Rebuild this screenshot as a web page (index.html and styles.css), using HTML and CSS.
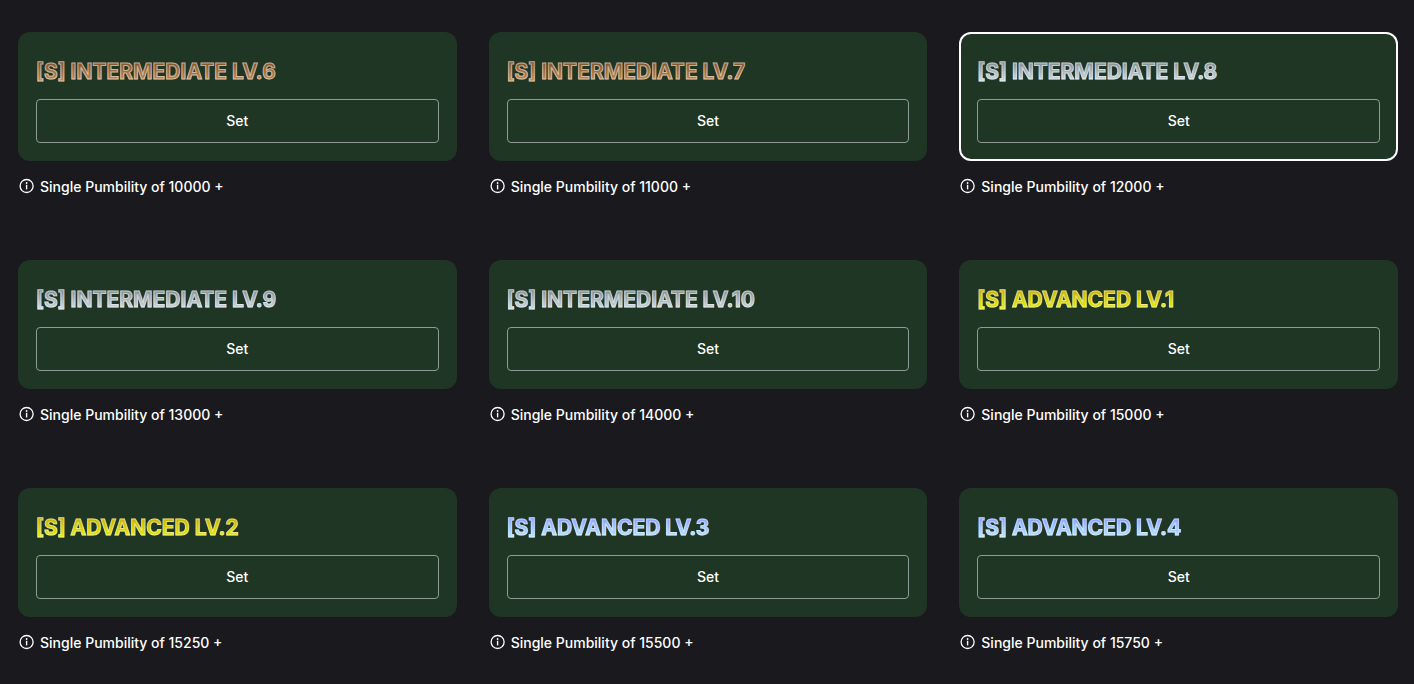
FILE: index.html
```
<!DOCTYPE html>
<html lang="en">
<head>
<meta charset="utf-8">
<meta name="viewport" content="width=device-width, initial-scale=1">
<title>Titles</title>
<link rel="stylesheet" href="styles.css">
</head>
<body>
<svg class="sprite" aria-hidden="true">
  <symbol id="info" viewBox="0 0 16 16">
    <circle cx="7.6" cy="8" r="6.5" fill="none" stroke="currentColor" stroke-width="1.3"/>
    <rect x="6.9" y="6.8" width="1.4" height="4.6" fill="currentColor"/>
    <circle cx="7.6" cy="5" r=".9" fill="currentColor"/>
  </symbol>
</svg>
<main class="grid">
  <article class="item">
    <section class="card"><h2 class="title bronze">[S] INTERMEDIATE LV.6</h2><button class="set" type="button">Set</button></section>
    <p class="note"><svg class="icon" aria-hidden="true"><use href="#info"/></svg><span>Single Pumbility of 10000 +</span></p>
  </article>
  <article class="item">
    <section class="card"><h2 class="title bronze">[S] INTERMEDIATE LV.7</h2><button class="set" type="button">Set</button></section>
    <p class="note"><svg class="icon" aria-hidden="true"><use href="#info"/></svg><span>Single Pumbility of 11000 +</span></p>
  </article>
  <article class="item">
    <section class="card selected"><h2 class="title silver">[S] INTERMEDIATE LV.8</h2><button class="set" type="button">Set</button></section>
    <p class="note"><svg class="icon" aria-hidden="true"><use href="#info"/></svg><span>Single Pumbility of 12000 +</span></p>
  </article>
  <article class="item">
    <section class="card"><h2 class="title silver">[S] INTERMEDIATE LV.9</h2><button class="set" type="button">Set</button></section>
    <p class="note"><svg class="icon" aria-hidden="true"><use href="#info"/></svg><span>Single Pumbility of 13000 +</span></p>
  </article>
  <article class="item">
    <section class="card"><h2 class="title silver">[S] INTERMEDIATE LV.10</h2><button class="set" type="button">Set</button></section>
    <p class="note"><svg class="icon" aria-hidden="true"><use href="#info"/></svg><span>Single Pumbility of 14000 +</span></p>
  </article>
  <article class="item">
    <section class="card"><h2 class="title gold">[S] ADVANCED LV.1</h2><button class="set" type="button">Set</button></section>
    <p class="note"><svg class="icon" aria-hidden="true"><use href="#info"/></svg><span>Single Pumbility of 15000 +</span></p>
  </article>
  <article class="item">
    <section class="card"><h2 class="title gold">[S] ADVANCED LV.2</h2><button class="set" type="button">Set</button></section>
    <p class="note"><svg class="icon" aria-hidden="true"><use href="#info"/></svg><span>Single Pumbility of 15250 +</span></p>
  </article>
  <article class="item">
    <section class="card"><h2 class="title platinum">[S] ADVANCED LV.3</h2><button class="set" type="button">Set</button></section>
    <p class="note"><svg class="icon" aria-hidden="true"><use href="#info"/></svg><span>Single Pumbility of 15500 +</span></p>
  </article>
  <article class="item">
    <section class="card"><h2 class="title platinum">[S] ADVANCED LV.4</h2><button class="set" type="button">Set</button></section>
    <p class="note"><svg class="icon" aria-hidden="true"><use href="#info"/></svg><span>Single Pumbility of 15750 +</span></p>
  </article>
</main>
</body>
</html>
```
FILE: styles.css
```
* { box-sizing: border-box; }
body {
  margin: 0;
  background: #1a191e;
  color: #fff;
  font-family: Inter, sans-serif;
  -webkit-font-smoothing: antialiased;
}
.sprite { position: absolute; width: 0; height: 0; }
.grid {
  display: grid;
  grid-template-columns: repeat(3, minmax(0, 1fr));
  gap: 63px 32px;
  padding: 32px 16px 0 18px;
}
.item { display: flex; flex-direction: column; gap: 16px; }
.card {
  display: flex;
  flex-direction: column;
  align-items: flex-start;
  gap: 13px;
  padding: 24px 16px 16px;
  border: 2px solid #1f3625;
  border-radius: 12px;
  background: #1f3625;
}
.selected { border-color: #fff; }
.title {
  margin: 0;
  font-size: 21px;
  line-height: 28px;
  font-weight: 700;
  color: transparent;
  -webkit-background-clip: text;
  background-clip: text;
  -webkit-text-stroke: 1px rgba(255, 255, 255, 0.5);
}
.bronze { background-image: linear-gradient(#6f4526, #d59b58); }
.silver { background-image: linear-gradient(#727b80, #e0f2f8); }
.gold { background-image: linear-gradient(#bda000, #f0ff00); }
.platinum { background-image: linear-gradient(#7c92ff, #c0f8ff); }
.set {
  align-self: stretch;
  height: 44px;
  padding: 0;
  border: 1px solid #909b93;
  border-radius: 4px;
  background: transparent;
  color: #fff;
  font: 500 14px/20px Inter, sans-serif;
}
.note {
  display: flex;
  align-items: flex-start;
  gap: 5px;
  margin: 0;
  font-size: 14px;
  line-height: 20px;
  font-weight: 500;
}
.icon { width: 16px; height: 18px; margin-left: 1px; flex: none; }
```
